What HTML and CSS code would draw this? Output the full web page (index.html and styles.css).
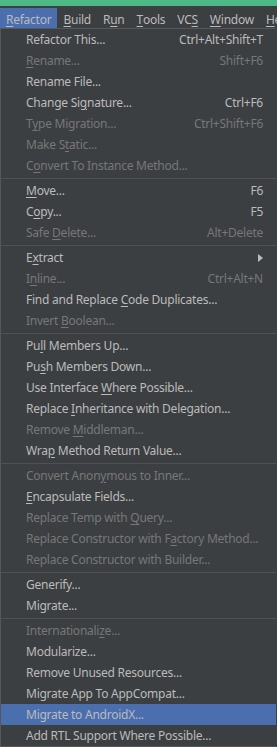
FILE: index.html
```html
<!DOCTYPE html>
<html>
<head>
<meta charset="utf-8">
<link rel="stylesheet" href="styles.css">
</head>
<body>
<div class="topstrip"></div>
<div class="menubar">
  <span class="mb active"><u>R</u>efactor</span>
  <span class="mb"><u>B</u>uild</span>
  <span class="mb">R<u>u</u>n</span>
  <span class="mb"><u>T</u>ools</span>
  <span class="mb">VC<u>S</u></span>
  <span class="mb"><u>W</u>indow</span>
  <span class="mb"><u>H</u>elp</span>
</div>
<div class="popup">
  <div class="item"><span class="label">Refactor This...</span><span class="key">Ctrl+Alt+Shift+T</span></div>
  <div class="item dis"><span class="label"><u>R</u>ename...</span><span class="key">Shift+F6</span></div>
  <div class="item"><span class="label">Rename File...</span></div>
  <div class="item"><span class="label">Change Si<u>g</u>nature...</span><span class="key">Ctrl+F6</span></div>
  <div class="item dis"><span class="label">T<u>y</u>pe Migration...</span><span class="key">Ctrl+Shift+F6</span></div>
  <div class="item dis"><span class="label">Make S<u>t</u>atic...</span></div>
  <div class="item dis"><span class="label">C<u>o</u>nvert To Instance Method...</span></div>
  <div class="sep"></div>
  <div class="item"><span class="label"><u>M</u>ove...</span><span class="key">F6</span></div>
  <div class="item"><span class="label">C<u>o</u>py...</span><span class="key">F5</span></div>
  <div class="item dis"><span class="label">Safe <u>D</u>elete...</span><span class="key">Alt+Delete</span></div>
  <div class="sep"></div>
  <div class="item"><span class="label">E<u>x</u>tract</span><span class="arrow"></span></div>
  <div class="item dis"><span class="label">I<u>n</u>line...</span><span class="key">Ctrl+Alt+N</span></div>
  <div class="item"><span class="label">Find and Replace <u>C</u>ode Duplicates...</span></div>
  <div class="item dis"><span class="label">Invert <u>B</u>oolean...</span></div>
  <div class="sep"></div>
  <div class="item"><span class="label">Pu<u>l</u>l Members Up...</span></div>
  <div class="item"><span class="label">Pu<u>s</u>h Members Down...</span></div>
  <div class="item"><span class="label">Use Interface <u>W</u>here Possible...</span></div>
  <div class="item"><span class="label">Replace <u>I</u>nheritance with Delegation...</span></div>
  <div class="item dis"><span class="label">Remove <u>M</u>iddleman...</span></div>
  <div class="item"><span class="label">Wra<u>p</u> Method Return Value...</span></div>
  <div class="sep"></div>
  <div class="item dis"><span class="label">Convert Anon<u>y</u>mous to Inner...</span></div>
  <div class="item"><span class="label"><u>E</u>ncapsulate Fields...</span></div>
  <div class="item dis"><span class="label">Replace Temp with <u>Q</u>uery...</span></div>
  <div class="item dis"><span class="label">Replace Constructor with F<u>a</u>ctory Method...</span></div>
  <div class="item dis"><span class="label">Replace Constructor with Builder...</span></div>
  <div class="sep"></div>
  <div class="item"><span class="label">Generify...</span></div>
  <div class="item"><span class="label">Migrate...</span></div>
  <div class="sep"></div>
  <div class="item dis"><span class="label">Internationali<u>z</u>e...</span></div>
  <div class="item"><span class="label">Modularize...</span></div>
  <div class="item"><span class="label">Remove Unused Resources...</span></div>
  <div class="item"><span class="label">Migrate App To AppCompat...</span></div>
  <div class="item sel"><span class="label">Migrate to AndroidX...</span></div>
  <div class="item"><span class="label">Add RTL Support Where Possible...</span></div>
</div>
</body>
</html>
```
FILE: styles.css
```css
html, body {
  margin: 0;
  padding: 0;
  background: #3c3f41;
  overflow: hidden;
}
body {
  width: 277px;
  height: 747px;
  font-family: "Noto Sans", "Open Sans", sans-serif;
  font-size: 12px;
  letter-spacing: -0.25px;
  color: #bbbbbb;
}
u {
  text-decoration-thickness: 1px;
  text-underline-offset: 2px;
}
.topstrip {
  height: 6px;
  background: #4fb887;
}
.menubar {
  height: 22px;
  display: flex;
  align-items: stretch;
  white-space: nowrap;
  background: #3c3f41;
}
.mb {
  display: flex;
  align-items: center;
  padding: 2px 6px 0 6px;
  margin-top: 2px;
}
.mb.active {
  background: #4b6eaf;
}
.popup {
  width: 275px;
  border: 1px solid #555759;
  border-right: none;
  background: #3c3f41;
  white-space: nowrap;
}
.item {
  height: 21px;
  display: flex;
  align-items: center;
  padding: 0 13px 0 25px;
}
.item .label {
  flex: 1;
}
.item.dis {
  color: #777777;
}
.item.sel {
  background: #4b6eaf;
  color: #bbbbbb;
}
.sep {
  height: 4px;
  display: flex;
  align-items: center;
}
.sep::before {
  content: "";
  flex: 1;
  height: 1px;
  background: #515151;
}
.arrow {
  width: 0;
  height: 0;
  border-top: 4px solid transparent;
  border-bottom: 4px solid transparent;
  border-left: 5px solid #bbbbbb;
}
```
